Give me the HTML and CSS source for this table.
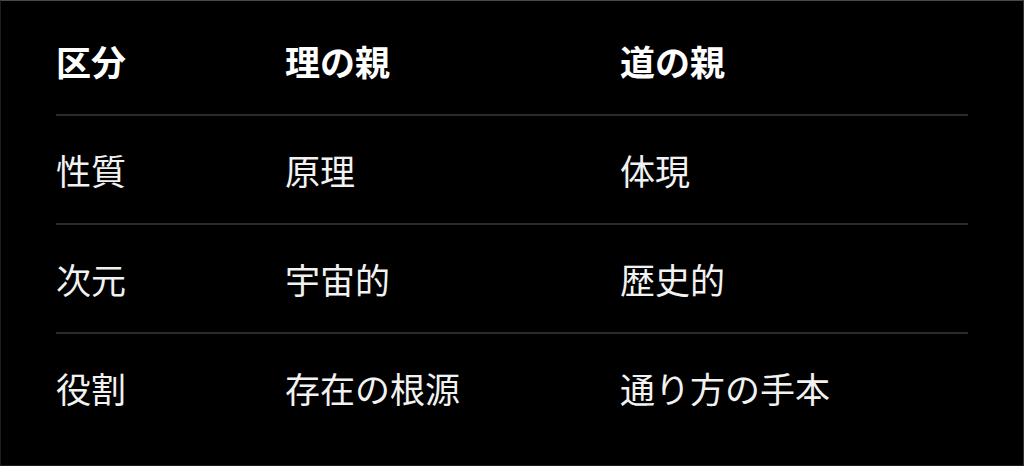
FILE: index.html
```html
<!DOCTYPE html>
<html lang="ja">
<head>
<meta charset="utf-8">
<link rel="stylesheet" href="styles.css">
</head>
<body>
<div class="frame">
  <table class="compare">
    <thead>
      <tr><th>区分</th><th>理の親</th><th>道の親</th></tr>
    </thead>
    <tbody>
      <tr><td>性質</td><td>原理</td><td>体現</td></tr>
      <tr><td>次元</td><td>宇宙的</td><td>歴史的</td></tr>
      <tr><td>役割</td><td>存在の根源</td><td>通り方の手本</td></tr>
    </tbody>
  </table>
</div>
</body>
</html>
```
FILE: styles.css
```css
html, body {
  margin: 0;
  padding: 0;
  background: #000;
}
.frame {
  box-sizing: border-box;
  width: 1024px;
  height: 466px;
  background: #000;
  border-top: 1px solid #4a4a4a;
  border-left: 1px solid #1e1e1e;
  border-right: 1px solid #333;
  border-bottom: 1px solid #1e1e1e;
  padding: 6px 0 0 55px;
}
.compare {
  width: 912px;
  border-collapse: collapse;
  font-family: "Noto Sans CJK JP", "Noto Sans", sans-serif;
  font-size: 35px;
  line-height: 51px;
  color: #f2f2f2;
}
.compare th,
.compare td {
  text-align: left;
  padding: 28px 0;
  vertical-align: middle;
}
.compare th {
  font-weight: 700;
  color: #fff;
}
.compare th:nth-child(1), .compare td:nth-child(1) { width: 229px; }
.compare th:nth-child(2), .compare td:nth-child(2) { width: 335px; }
.compare thead tr,
.compare tbody tr:not(:last-child) {
  border-bottom: 2px solid #2b2b2b;
}
```
